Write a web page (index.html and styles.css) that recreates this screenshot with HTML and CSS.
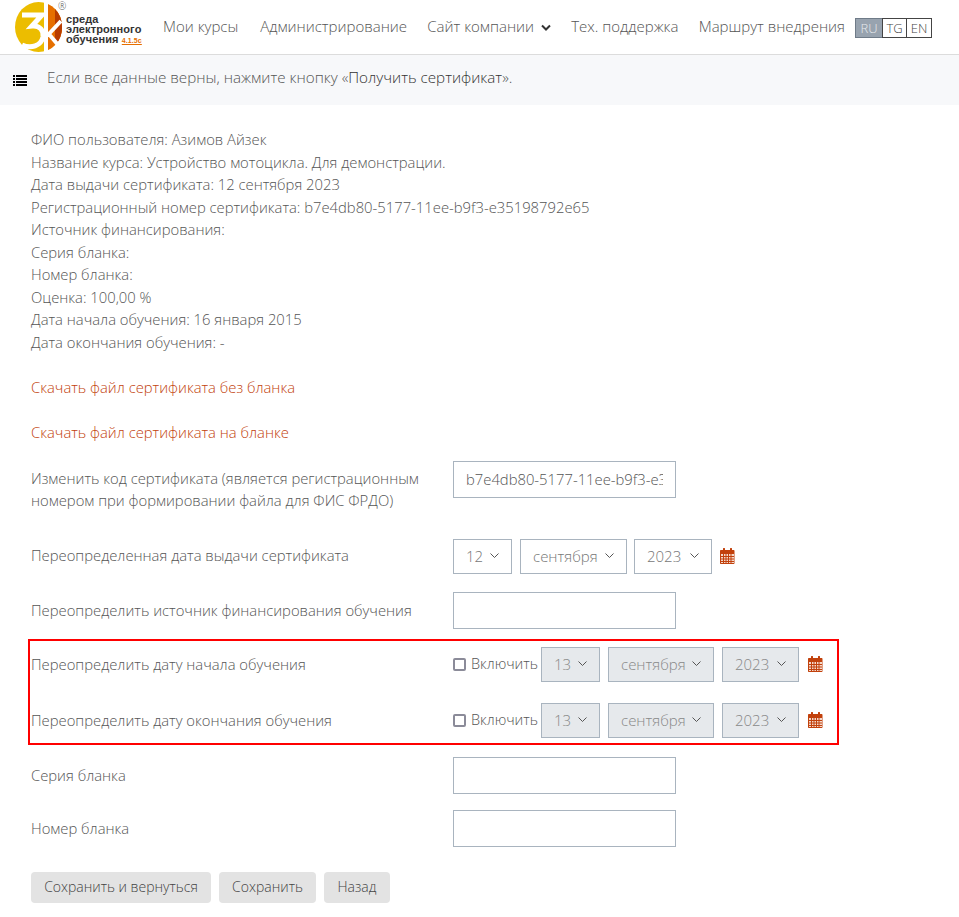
FILE: index.html
```html
<!DOCTYPE html>
<html lang="ru">
<head>
    <meta charset="UTF-8">
    <meta name="viewport" content="width=device-width, initial-scale=1.0">
    <title>Сертификат</title>
    <link rel="stylesheet" href="styles.css">
</head>
<body>

    <header class="navbar">
        <a class="brand" href="#">
            <svg class="brand-mark" width="47" height="50" viewBox="0 0 47 50">
                <ellipse cx="23.5" cy="25" rx="23.5" ry="25" fill="#ecbd00"/>
                <path d="M30 .9A23.5 25 0 0 1 30 49.1Z" fill="#e66f00"/>
                <path d="M40 7A23.5 25 0 0 1 47 25 23.5 25 0 0 1 42 41L40 36Z" fill="#b83c00"/>
                <path d="M7 13H27L17 24C25 23 29 29 28 35 26 44 16 47 7 43" fill="none" stroke="#fff" stroke-width="5"/>
                <path d="M31 0V50M32 34L46 19M33 31L44 44" fill="none" stroke="#fff" stroke-width="4"/>
            </svg>
            <span class="brand-reg">®</span>
            <span class="brand-text">среда<br>электронного<br>обучения <em>4.1.5c</em></span>
        </a>
        <nav class="menu">
            <a class="menu-first" href="#">Мои курсы</a>
            <a href="#">Администрирование</a>
            <a href="#">Сайт компании
                <svg class="caret" width="10" height="7" viewBox="0 0 10 7"><path d="M1 1.5l4 4 4-4" fill="none" stroke="#333" stroke-width="2"/></svg>
            </a>
            <a href="#">Тех. поддержка</a>
            <a href="#">Маршрут внедрения</a>
        </nav>
        <div class="langs">
            <a class="lang lang-ru active" href="#">RU</a>
            <a class="lang lang-tg" href="#">TG</a>
            <a class="lang lang-en" href="#">EN</a>
        </div>
    </header>

    <div class="notice">
        <svg class="list-icon" width="14" height="11" viewBox="0 0 14 11">
            <path d="M0 0h2v2H0zM3 0h11v2H3zM0 3h2v2H0zM3 3h11v2H3zM0 6h2v2H0zM3 6h11v2H3zM0 9h2v2H0zM3 9h11v2H3z" fill="#000"/>
        </svg>
        <p>Если все данные верны, нажмите кнопку «<span class="dark">Получить сертификат</span>».</p>
    </div>

    <main class="content">
        <div class="info">
            <div>ФИО пользователя: Азимов Айзек</div>
            <div>Название курса: Устройство мотоцикла. Для демонстрации.</div>
            <div>Дата выдачи сертификата: 12 сентября 2023</div>
            <div>Регистрационный номер сертификата: b7e4db80-5177-11ee-b9f3-e35198792e65</div>
            <div>Источник финансирования:</div>
            <div>Серия бланка:</div>
            <div>Номер бланка:</div>
            <div>Оценка: 100,00 %</div>
            <div>Дата начала обучения: 16 января 2015</div>
            <div>Дата окончания обучения: -</div>
        </div>

        <a class="file-link" href="#">Скачать файл сертификата без бланка</a>
        <a class="file-link file-link-last" href="#">Скачать файл сертификата на бланке</a>

        <form class="cert-form">
            <div class="row row-code">
                <label>Изменить код сертификата (является регистрационным номером при формировании файла для ФИС ФРДО)</label>
                <input class="field" type="text" value="b7e4db80-5177-11ee-b9f3-e35198792e65">
            </div>
            <div class="row row-date">
                <label>Переопределенная дата выдачи сертификата</label>
                <div class="date-group">
                    <span class="select sel-day">12<svg class="chev" width="9" height="5" viewBox="0 0 9 5"><path d="M.5.5l4 4 4-4"/></svg></span>
                    <span class="select sel-month">сентября<svg class="chev" width="9" height="5" viewBox="0 0 9 5"><path d="M.5.5l4 4 4-4"/></svg></span>
                    <span class="select sel-year">2023<svg class="chev" width="9" height="5" viewBox="0 0 9 5"><path d="M.5.5l4 4 4-4"/></svg></span>
                    <svg class="cal" width="15" height="16" viewBox="0 0 15 16"><use href="#cal-icon"/></svg>
                </div>
            </div>
            <div class="row row-source">
                <label>Переопределить источник финансирования обучения</label>
                <input class="field" type="text">
            </div>

            <div class="marked">
                <div class="row row-marked">
                    <label>Переопределить дату начала обучения</label>
                    <div class="date-group">
                        <span class="check"><i class="box"></i>Включить</span>
                        <span class="select off sel-day">13<svg class="chev" width="9" height="5" viewBox="0 0 9 5"><path d="M.5.5l4 4 4-4"/></svg></span>
                        <span class="select off sel-month">сентября<svg class="chev" width="9" height="5" viewBox="0 0 9 5"><path d="M.5.5l4 4 4-4"/></svg></span>
                        <span class="select off sel-year">2023<svg class="chev" width="9" height="5" viewBox="0 0 9 5"><path d="M.5.5l4 4 4-4"/></svg></span>
                        <svg class="cal" width="15" height="16" viewBox="0 0 15 16"><use href="#cal-icon"/></svg>
                    </div>
                </div>
                <div class="row row-marked">
                    <label>Переопределить дату окончания обучения</label>
                    <div class="date-group">
                        <span class="check"><i class="box"></i>Включить</span>
                        <span class="select off sel-day">13<svg class="chev" width="9" height="5" viewBox="0 0 9 5"><path d="M.5.5l4 4 4-4"/></svg></span>
                        <span class="select off sel-month">сентября<svg class="chev" width="9" height="5" viewBox="0 0 9 5"><path d="M.5.5l4 4 4-4"/></svg></span>
                        <span class="select off sel-year">2023<svg class="chev" width="9" height="5" viewBox="0 0 9 5"><path d="M.5.5l4 4 4-4"/></svg></span>
                        <svg class="cal" width="15" height="16" viewBox="0 0 15 16"><use href="#cal-icon"/></svg>
                    </div>
                </div>
            </div>

            <div class="row row-serial">
                <label>Серия бланка</label>
                <input class="field" type="text">
            </div>
            <div class="row row-number">
                <label>Номер бланка</label>
                <input class="field" type="text">
            </div>
            <div class="buttons">
                <button type="button" class="button btn-return">Сохранить и вернуться</button>
                <button type="button" class="button btn-save">Сохранить</button>
                <button type="button" class="button btn-back">Назад</button>
            </div>
        </form>
    </main>

    <svg class="defs" width="0" height="0">
        <symbol id="cal-icon" viewBox="0 0 15 16">
            <path fill="#f3d9cc" d="M1 3h13v12.5H1z"/>
            <path fill="#c2410c" d="M3 .5C3 .2 3.2 0 3.5 0h1c.3 0 .5.2.5.5V2h5V.5c0-.3.2-.5.5-.5h1c.3 0 .5.2.5.5V2h1.5c.6 0 1 .4 1 1v12c0 .6-.4 1-1 1H1c-.6 0-1-.4-1-1V3c0-.6.4-1 1-1h2zM1 6v9h13V6z"/>
            <path fill="none" stroke="#c2410c" stroke-width="1" d="M1 8.5h13M1 11h13M1 13.5h13M3.5 6v9M6 6v9M8.5 6v9M11 6v9"/>
        </symbol>
    </svg>

</body>
</html>
```
FILE: styles.css
```css
body {
    font-family: "Open Sans", "Noto Sans", sans-serif;
    font-weight: 300;
    font-size: 14.8px;
    line-height: 22.5px;
    color: #555;
    margin: 0;
    background: #fff;
}
a {
    text-decoration: none;
    color: inherit;
}
.navbar {
    display: flex;
    align-items: center;
    height: 54px;
    border-bottom: 1px solid #dcdcdc;
    padding-left: 15px;
    font-size: 15px;
}
.brand {
    display: flex;
    align-items: center;
    position: relative;
    width: 148px;
    margin-top: -1px;
}
.brand-mark {
    flex: none;
}
.brand-reg {
    position: absolute;
    left: 43px;
    top: -2px;
    font-size: 10px;
    line-height: 12px;
}
.brand-text {
    font-family: "Liberation Sans", sans-serif;
    font-weight: 700;
    font-size: 11px;
    line-height: 10.2px;
    letter-spacing: .1px;
    color: #333;
    margin-left: 4px;
    margin-top: 7px;
    white-space: nowrap;
}
.brand-text em {
    font-style: normal;
    font-size: 7px;
    color: #e66f00;
    text-decoration: underline;
}
.menu {
    display: flex;
    gap: 20.25px;
    margin-top: -2px;
}
.menu a {
    white-space: nowrap;
}
.menu .menu-first {
    width: 77px;
}
.caret {
    margin-left: 3px;
    vertical-align: 1px;
}
.langs {
    display: flex;
    margin-left: 11px;
    margin-top: 1px;
}
.lang {
    font-size: 13px;
    line-height: 18px;
    text-align: center;
    border: 1px solid #444;
    margin-left: -1px;
    color: #444;
}
.lang-ru {
    width: 26px;
}
.lang-tg {
    width: 23px;
}
.lang-en {
    width: 24px;
}
.lang.active {
    background: #98a3af;
    border-color: #6f7b88;
    color: #e6e9ec;
}
.notice {
    display: flex;
    align-items: center;
    height: 50px;
    background: #f7f8fa;
    padding-left: 13px;
    padding-bottom: 5px;
    box-sizing: border-box;
    font-size: 15.2px;
}
.notice p {
    margin: 0 0 0 20px;
}
.list-icon {
    margin-top: 5px;
}
.dark {
    color: #333;
}
.content {
    padding: 23px 31px 0;
}
.info {
    margin-bottom: 22.5px;
}
.file-link {
    display: block;
    color: #c2410c;
    margin-bottom: 22.5px;
}
.file-link-last {
    margin-bottom: 17.5px;
}
.row {
    display: flex;
    align-items: flex-start;
}
.row label {
    width: 422px;
    flex: none;
    box-sizing: border-box;
}
.field {
    width: 223px;
    height: 37px;
    box-sizing: border-box;
    border: 1px solid #a9b4bf;
    padding: 0 12px;
    font: inherit;
    color: #555;
    outline: none;
}
.row-code {
    height: 78px;
}
.row-code label {
    padding: 6px 10px 0 0;
}
.row-date {
    height: 53px;
}
.row-date label {
    padding-top: 5px;
}
.row-source {
    height: 47px;
}
.row-source label {
    padding-top: 7px;
}
.date-group {
    display: flex;
    align-items: center;
    color: #777;
}
.select {
    display: flex;
    align-items: center;
    justify-content: space-between;
    height: 35px;
    box-sizing: border-box;
    border: 1px solid #a9b4bf;
    padding: 0 12px;
    margin-right: 8px;
    font-size: 15px;
}
.select.off {
    background: #e6e9ec;
    color: #888;
}
.sel-day {
    width: 59px;
}
.sel-month {
    width: 107px;
    margin-right: 7px;
}
.sel-year {
    width: 78px;
}
.select.off.sel-month {
    width: 106px;
    margin-right: 8px;
}
.select.off.sel-year {
    width: 77px;
    margin-right: 9px;
}
.chev {
    fill: none;
    stroke: #555;
    stroke-width: 1;
    margin-top: -1px;
}
.marked {
    display: flex;
    flex-direction: column;
    gap: 21px;
    margin-left: -3px;
    width: 811px;
    box-sizing: border-box;
    border: 2px solid #f00;
    padding: 6px 0 5px 1px;
}
.row-marked label {
    padding-top: 6px;
}
.check {
    display: flex;
    align-items: center;
    width: 88px;
    font-size: 14.5px;
    color: #555;
    white-space: nowrap;
}
.box {
    flex: none;
    width: 9px;
    height: 9px;
    border: 2px solid #8b8b99;
    border-radius: 2px;
    margin-right: 5px;
}
.row-serial {
    margin-top: 12px;
    height: 53px;
}
.row-number {
    height: 53px;
}
.row-serial label, .row-number label {
    padding-top: 7px;
}
.buttons {
    display: flex;
    gap: 8px;
    margin-top: 9px;
}
.button {
    height: 31px;
    padding: 0;
    font: inherit;
    font-size: 14px;
    color: #444;
    background: #e3e3e3;
    border: none;
    border-radius: 4px;
}
.btn-return {
    width: 180px;
}
.btn-save {
    width: 97px;
}
.btn-back {
    width: 66px;
}
.defs {
    position: absolute;
}
```
